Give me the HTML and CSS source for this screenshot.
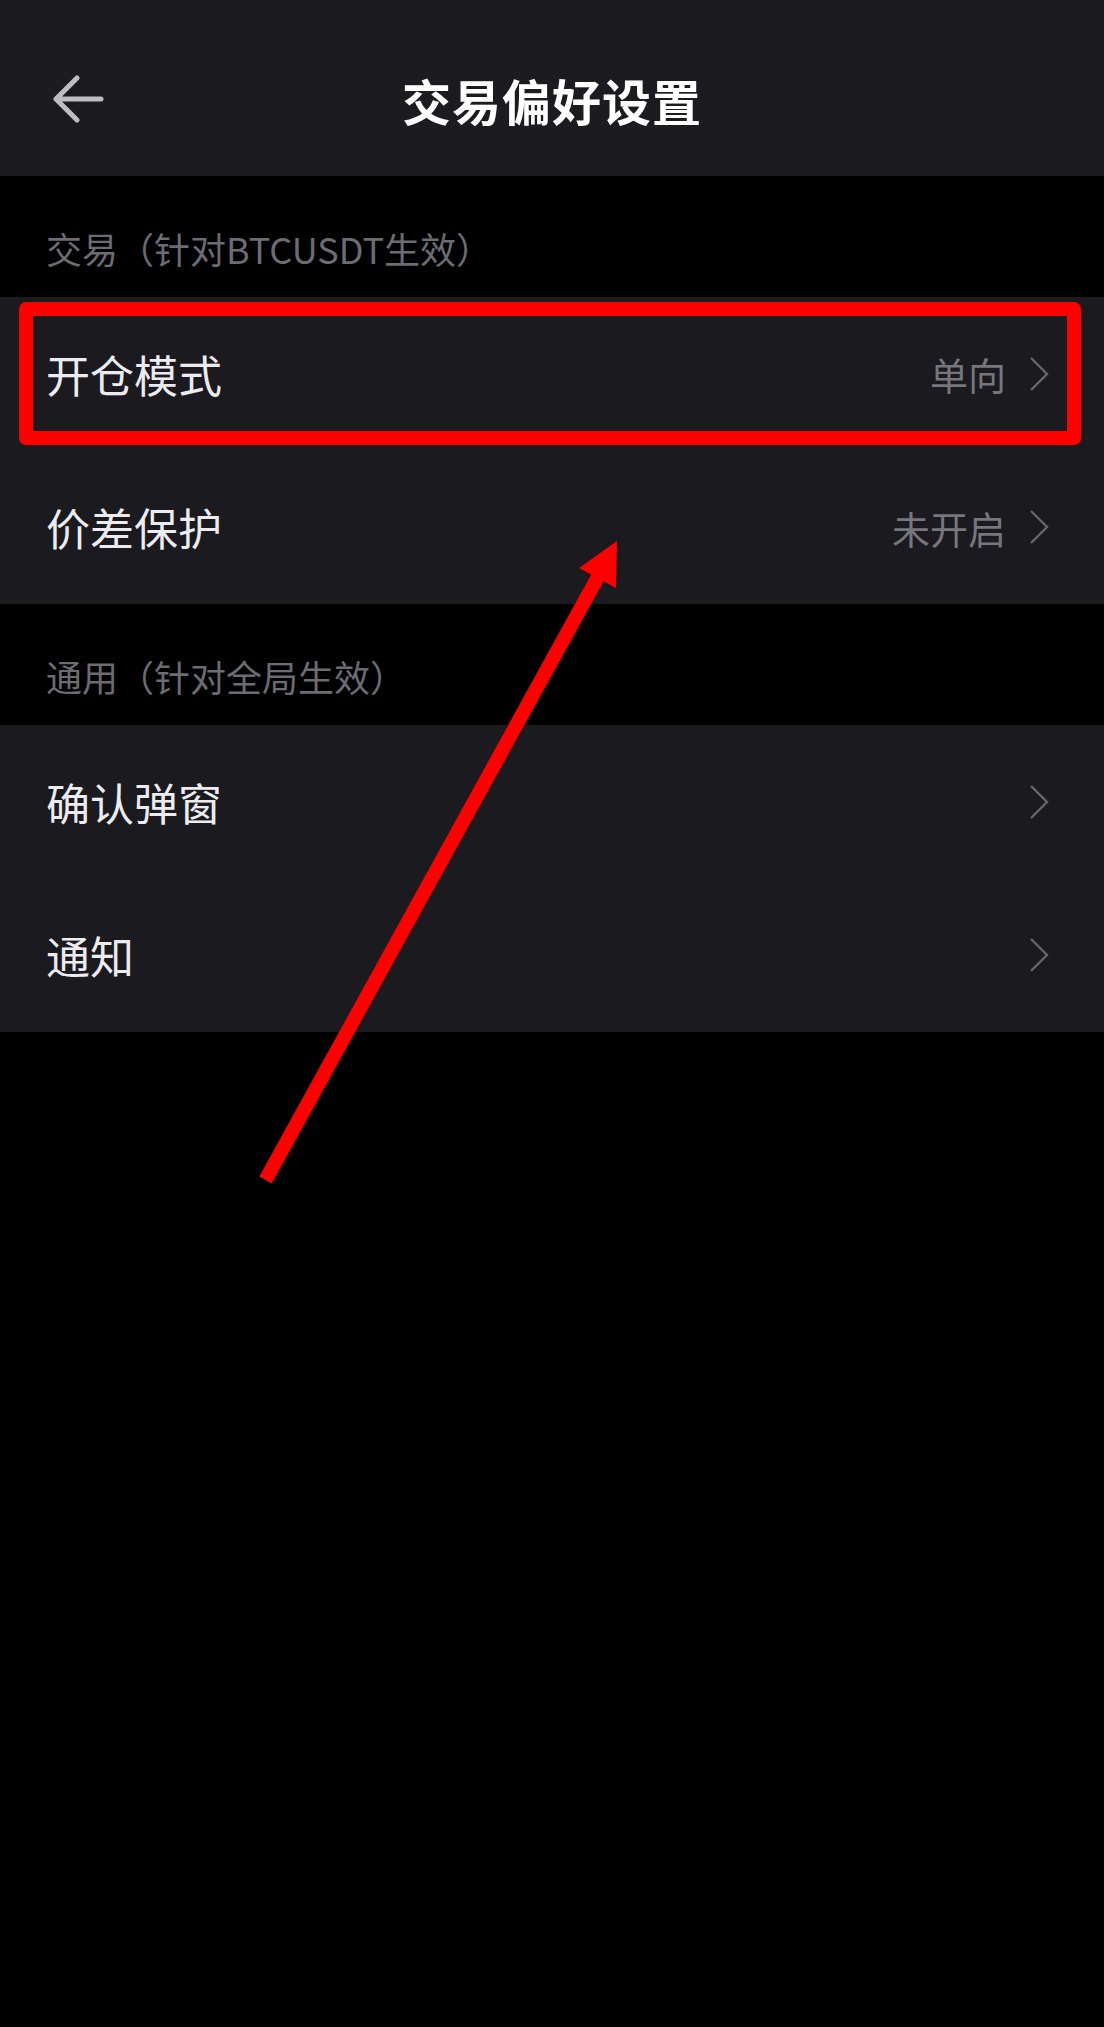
FILE: index.html
```html
<!DOCTYPE html>
<html lang="zh-CN">
<head>
<meta charset="utf-8">
<title>交易偏好设置</title>
<link rel="stylesheet" href="styles.css">
</head>
<body>
<div class="page">
  <header class="topbar">
    <div class="back">
      <svg width="52" height="50" viewBox="0 0 52 50" aria-hidden="true">
        <path d="M49 24 H5 M25 3 L4 24 L25 45" fill="none" stroke="#bdbdc2" stroke-width="5" stroke-linecap="round" stroke-linejoin="round"/>
      </svg>
    </div>
    <h1 class="title">交易偏好设置</h1>
    <div class="spacer"></div>
  </header>

  <div class="section-head">交易（针对BTCUSDT生效）</div>
  <div class="group">
    <div class="row">
      <span class="label">开仓模式</span>
      <span class="value">单向</span>
      <svg class="chev" width="22" height="36" viewBox="0 0 22 36" aria-hidden="true"><path d="M3 2 L19 18 L3 34" fill="none" stroke="#66666c" stroke-width="2.4"/></svg>
    </div>
    <div class="row">
      <span class="label">价差保护</span>
      <span class="value">未开启</span>
      <svg class="chev" width="22" height="36" viewBox="0 0 22 36" aria-hidden="true"><path d="M3 2 L19 18 L3 34" fill="none" stroke="#66666c" stroke-width="2.4"/></svg>
    </div>
  </div>

  <div class="section-head">通用（针对全局生效）</div>
  <div class="group">
    <div class="row">
      <span class="label">确认弹窗</span>
      <span class="value"></span>
      <svg class="chev" width="22" height="36" viewBox="0 0 22 36" aria-hidden="true"><path d="M3 2 L19 18 L3 34" fill="none" stroke="#66666c" stroke-width="2.4"/></svg>
    </div>
    <div class="row">
      <span class="label">通知</span>
      <span class="value"></span>
      <svg class="chev" width="22" height="36" viewBox="0 0 22 36" aria-hidden="true"><path d="M3 2 L19 18 L3 34" fill="none" stroke="#66666c" stroke-width="2.4"/></svg>
    </div>
  </div>

  <div class="highlight"></div>
  <svg class="annot" width="1104" height="2027" viewBox="0 0 1104 2027" aria-hidden="true">
    <line x1="265.5" y1="1180" x2="599" y2="575" stroke="#ff0000" stroke-width="14"/>
    <polygon points="617,541 579,568 616,588" fill="#ff0000"/>
  </svg>
</div>
</body>
</html>
```

FILE: styles.css
```css
* { box-sizing: border-box; }
html, body {
  margin: 0;
  padding: 0;
  background: #000;
}
body {
  font-family: "Noto Sans CJK SC", "Noto Sans", sans-serif;
}
.page {
  position: relative;
  width: 1104px;
  height: 2027px;
  background: #000;
  overflow: hidden;
}
.topbar {
  height: 176px;
  padding-top: 18px;
  background: #1b1b20;
  display: grid;
  grid-template-columns: 1fr auto 1fr;
  align-items: center;
}
.back {
  padding-left: 52px;
  padding-top: 6px;
  display: flex;
  align-items: center;
}
.back svg { display: block; }
.title {
  margin: 0;
  color: #ffffff;
  font-size: 49px;
  font-weight: 700;
  letter-spacing: 1px;
  line-height: 1;
  padding-top: 4px;
}
.section-head {
  height: 121px;
  padding-left: 46px;
  padding-top: 22px;
  display: flex;
  align-items: center;
  color: #6c6c72;
  font-size: 36px;
}
.group {
  background: #1a1a1f;
}
.row {
  height: 153.5px;
  display: flex;
  align-items: center;
  padding-left: 46px;
  padding-right: 54px;
}
.label {
  flex: 1;
  color: #ececf0;
  font-size: 44px;
}
.value {
  color: #76767c;
  font-size: 38px;
  margin-right: 22px;
}
.chev { display: block; }
.highlight {
  position: absolute;
  left: 19px;
  top: 302px;
  width: 1062px;
  height: 143px;
  border: 14px solid #ff0000;
  border-radius: 7px;
  pointer-events: none;
}
.annot {
  position: absolute;
  left: 0;
  top: 0;
  pointer-events: none;
}
```
